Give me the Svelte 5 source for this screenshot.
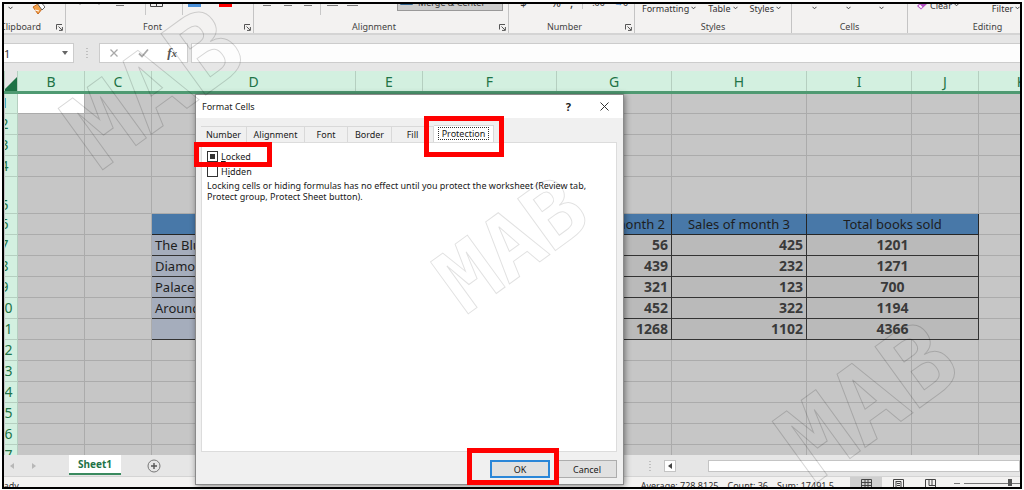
<script lang="ts">
	const columns = [
		{ name: 'B', width: 67 },
		{ name: 'C', width: 67 },
		{ name: 'D', width: 204 },
		{ name: 'E', width: 67 },
		{ name: 'F', width: 134 },
		{ name: 'G', width: 115 },
		{ name: 'H', width: 135 },
		{ name: 'I', width: 105 },
		{ name: 'J', width: 67 },
		{ name: 'K', width: 0 }
	];
	const books: Record<number, { title: string; month2: number; month3: number; total: number }> = {
		7: { title: 'The Blue', month2: 56, month3: 425, total: 1201 },
		8: { title: 'Diamond', month2: 439, month3: 232, total: 1271 },
		9: { title: 'Palace', month2: 321, month3: 123, total: 700 },
		10: { title: 'Around', month2: 452, month3: 322, total: 1194 },
		11: { title: '', month2: 1268, month3: 1102, total: 4366 }
	};
	const rows = Array.from({ length: 17 }, (_, i) => i + 1);
	const tabs = ['Number', 'Alignment', 'Font', 'Border', 'Fill', 'Protection'];
	let activeTab = $state('Protection');
	let locked = $state(false);
	let mixed = $state(true);
	let hidden = $state(false);
</script>

{#snippet chevron()}
	<svg class="chevron" width="5" height="4" viewBox="0 0 5 4"><path d="M.5 .8 2.5 2.8 4.5 .8" /></svg>
{/snippet}

{#snippet launcher()}
	<button class="launcher" aria-label="More options">
		<svg width="7" height="7" viewBox="0 0 7 7"><path d="M.5 5.5V.5H6M2.5 2.5 6 6M6.4 3V6.4H3" /></svg>
	</button>
{/snippet}

<div class="page">
	<div class="excel">
		<div class="ribbon">
			<section class="group clipboard">
				<div class="tools">
					<button aria-label="Paste">{@render chevron()}</button>
					<button aria-label="Format Painter">
						<svg width="14" height="14" viewBox="0 0 14 14">
							<path d="M2 6 7 3 11 8 7 13Z" fill="#f3a24a" stroke="#c8681c" />
							<path d="M6 2 9 0 14 6 11 9Z" fill="#fff" stroke="#666" />
							<path d="M4 9 8 10" stroke="#fff" />
						</svg>
					</button>
				</div>
				<div class="caption with-launcher"><span>Clipboard</span>{@render launcher()}</div>
			</section>
			<section class="group font">
				<div class="tools">
					<button aria-label="Bold"><svg width="20" height="14"><path d="M9 3h2" stroke="#999" /></svg></button>
					<button aria-label="Italic"><svg width="20" height="14"><path d="M8 3h2" stroke="#999" /></svg></button>
					<button aria-label="Underline"><svg width="20" height="14"><path d="M6 4.500h8" stroke="#777" /></svg></button>
					<i class="rule first"></i>
					<button class="drop" aria-label="Borders">
						<svg width="20" height="14"><path d="M4.500 0V5.500H16.500V0M10.500 0V5M4 1.500H17" stroke="#444" fill="none" /></svg>
					</button>
					<i class="rule"></i>
					<button class="drop" aria-label="Fill Color"><svg width="20" height="14"><rect x="5" width="13" height="6" fill="#4a90d9" /></svg></button>
					<button aria-label="Font Color"><svg width="20" height="14"><rect width="13" height="6" fill="#f00" /></svg></button>
				</div>
				<div class="caption with-launcher"><span>Font</span>{@render launcher()}</div>
			</section>
			<section class="group align">
				<div class="tools">
					<button aria-label="Align Left"><svg width="20" height="14"><path d="M5 4.500h8M5 1.500h8" stroke="#777" /></svg></button>
					<button aria-label="Center"><svg width="20" height="14"><path d="M6 4.500h8M5 1.500h8" stroke="#777" /></svg></button>
					<button aria-label="Align Right"><svg width="20" height="14"><path d="M6 4.500h8M5 1.500h8" stroke="#777" /></svg></button>
					<i class="rule"></i>
					<button aria-label="Decrease Indent"><svg width="20" height="14"><path d="M6 4.500h11M5 1.500h8" stroke="#777" /></svg></button>
					<button aria-label="Increase Indent"><svg width="20" height="14"><path d="M6 4.500h11M5 1.500h8" stroke="#777" /></svg></button>
					<button class="merge">
						<svg width="14" height="8" viewBox="0 0 14 8"><path d="M.5 0V6.500H12.500V0M6.500 4V6M1 3.500H12" stroke="#33658f" fill="#cfe3f5" /></svg>
						Merge &amp; Center
					</button>
				</div>
				<div class="caption with-launcher"><span>Alignment</span>{@render launcher()}</div>
			</section>
			<section class="group number">
				<div class="tools">
					<button class="currency">$</button>
					<button>%</button>
					<button>,</button>
					<i class="rule"></i>
					<button class="small">.00</button>
					<button class="small"><b>→</b>0</button>
				</div>
				<div class="caption with-launcher"><span>Number</span>{@render launcher()}</div>
			</section>
			<section class="group styles">
				<div class="tools">
					<button>Formatting {@render chevron()}</button>
					<button>Table {@render chevron()}</button>
					<button>Styles {@render chevron()}</button>
				</div>
				<div class="caption"><span>Styles</span></div>
			</section>
			<section class="group cells">
				<div class="tools">
					<button aria-label="Insert">{@render chevron()}</button>
					<button aria-label="Delete">{@render chevron()}</button>
					<button aria-label="Format">{@render chevron()}</button>
				</div>
				<div class="caption"><span>Cells</span></div>
			</section>
			<section class="group editing">
				<div class="tools">
					<button class="clear">
						<svg width="12" height="10" viewBox="0 0 12 10">
							<path d="M1 6 7 0 11 4 5 9.500Z" fill="#b452c4" />
							<path d="M2.500 6 4 4.500 6.500 7 5 8.300Z" fill="#fff" />
						</svg>
						Clear {@render chevron()}
					</button>
					<button>Filter {@render chevron()}</button>
				</div>
				<div class="caption"><span>Editing</span></div>
			</section>
		</div>

		<div class="formula">
			<div class="namebox">
				<input aria-label="Name box" value="1" />
				<svg width="6" height="4" viewBox="0 0 6 4"><path d="M0 0H6L3 4Z" fill="#666" /></svg>
			</div>
			<svg class="grip" width="2" height="10"><path d="M1 0V10" stroke="#999" stroke-dasharray="1 2" /></svg>
			<div class="entry">
				<button aria-label="Cancel entry"><svg width="10" height="10"><path d="M1.500 1.500 8.500 8.500M8.500 1.500 1.500 8.500" stroke="#a8a8a8" stroke-width="1.300" fill="none" /></svg></button>
				<button aria-label="Enter"><svg width="11" height="10"><path d="M1 5.500 4 8.500 10 1.500" stroke="#a8a8a8" stroke-width="1.800" fill="none" /></svg></button>
				<button class="fx" aria-label="Insert function">f<sub>x</sub></button>
			</div>
			<input class="formula-input" aria-label="Formula" />
		</div>

		<div class="sheet">
			<table>
				<colgroup>
					<col class="rowhead-col" />
					{#each columns as column}
						<col style:width={column.width ? `${column.width}px` : null} />
					{/each}
				</colgroup>
				<thead>
					<tr>
						<th class="corner" aria-label="Select all"><svg width="12" height="14"><path d="M12 0V14H0V12Z" fill="#1f7246" /></svg></th>
						{#each columns as column}
							<th>{column.name}</th>
						{/each}
					</tr>
				</thead>
				<tbody>
					{#each rows as row}
						<tr class:tall={row === 5}>
							<th class="rowhead"><div>{row}</div></th>
							<td class:active={row === 1}></td>
							<td></td>
							{#if row === 6}
								<td class="head"></td><td class="head"></td><td class="head"></td>
								<td class="head">Sales of month 2</td>
								<td class="head">Sales of month 3</td>
								<td class="head" colspan="2">Total books sold</td>
							{:else if books[row]}
								<td class="book">{books[row].title}</td>
								<td class="num"></td>
								<td class="num"></td>
								<td class="num">{books[row].month2}</td>
								<td class="num">{books[row].month3}</td>
								<td class="num total" colspan="2">{books[row].total}</td>
							{:else}
								<td></td><td></td><td></td><td></td><td></td><td></td><td></td>
							{/if}
							<td></td>
						</tr>
					{/each}
				</tbody>
			</table>
		</div>

		<div class="sheetbar">
			<div class="nav">
				<svg width="4" height="6"><path d="M4 0V6L0 3Z" fill="#b8b8b8" /></svg>
				<svg width="4" height="6"><path d="M0 0V6L4 3Z" fill="#b8b8b8" /></svg>
			</div>
			<button class="sheet-tab">Sheet1</button>
			<button class="add" aria-label="New sheet">
				<svg width="14" height="14" viewBox="0 0 14 14"><circle cx="7" cy="7" r="6" fill="none" stroke="#777" /><path d="M7 4V10M4 7H10" stroke="#555" stroke-width="1.400" /></svg>
			</button>
			<div class="scroller">
				<svg class="grip" width="2" height="10"><path d="M1 0V10" stroke="#999" stroke-dasharray="1 2" /></svg>
				<button class="scroll-left" aria-label="Scroll left"><svg width="4" height="6"><path d="M4 0V6L0 3Z" fill="#444" /></svg></button>
				<div class="thumb"></div>
			</div>
		</div>

		<div class="status">
			<span class="ready">Ready</span>
			<div class="stats">
				<span>Average: 728.8125</span>
				<span>Count: 36</span>
				<span>Sum: 17491.5</span>
			</div>
			<div class="views">
				<button class="on" aria-label="Normal"><svg width="11" height="9"><path d="M.5 .5H10.500V8.500H.5ZM4 0V9M7 0V9M0 3.500H11M0 6.500H11" /></svg></button>
				<button aria-label="Page Layout"><svg width="11" height="9"><path d="M.5 .5H10.500V8.500H.5ZM3 2.500H8V9M3 2V9M4 4.500H7M4 6.500H7" /></svg></button>
				<button aria-label="Page Break Preview"><svg width="11" height="9"><path d="M.5 .5H10.500V8.500H.5ZM4 0V6.500H11M7 0V6" /></svg></button>
			</div>
			<svg class="zoom" width="66" height="9"><path d="M0 6.500H6M10 6.500H66" stroke="#777" /><rect x="54" y="2" width="4" height="7" fill="#555" /></svg>
		</div>
	</div>

	<div class="dialog" role="dialog" aria-labelledby="dialog-title">
		<header>
			<h1 id="dialog-title">Format Cells</h1>
			<button aria-label="Help">?</button>
			<button aria-label="Close"><svg width="9" height="9"><path d="M.5 .5 8.500 8.500M8.500 .5 .5 8.500" stroke="#333" /></svg></button>
		</header>
		<div class="tabs" role="tablist">
			{#each tabs as tab}
				<button
					role="tab"
					class={tab.toLowerCase()}
					class:selected={tab === activeTab}
					aria-selected={tab === activeTab}
					onclick={() => (activeTab = tab)}
				>
					<span>{tab}</span>
				</button>
			{/each}
		</div>
		<div class="panel">
			<label><input type="checkbox" bind:checked={locked} bind:indeterminate={mixed} /><span><u>L</u>ocked</span></label>
			<label><input type="checkbox" bind:checked={hidden} /><span>H<u>i</u>dden</span></label>
			<p>Locking cells or hiding formulas has no effect until you protect the worksheet (Review tab, Protect group, Protect Sheet button).</p>
		</div>
		<footer>
			<button class="ok">OK</button>
			<button>Cancel</button>
		</footer>
	</div>

	<div class="mark mark-locked"></div>
	<div class="mark mark-tab"></div>
	<div class="mark mark-ok"></div>

	<span class="watermark one">MAB</span>
	<span class="watermark two">MAB</span>
	<span class="watermark three">MAB</span>
</div>

<style>
	:global(body) {
		background: #fdfdfd;
	}
	.page {
		position: relative;
		box-sizing: border-box;
		height: 100vh;
		padding: 2px 2px 1px;
		overflow: hidden;
		font-family: 'Noto Sans', 'Open Sans', sans-serif;
		font-size: 9px;
		color: #333;
	}
	.page * {
		box-sizing: border-box;
	}
	button,
	input {
		font: inherit;
		color: inherit;
		margin: 0;
		padding: 0;
		border: 0;
		background: none;
	}
	svg {
		flex: none;
	}
	.excel {
		display: flex;
		flex-direction: column;
		height: 100%;
		border: 2px solid #000;
		overflow: hidden;
		background: #e6e6e6;
	}

	/* ribbon */
	.ribbon {
		display: flex;
		flex: none;
		height: 31px;
		background: #f3f2f1;
		border-bottom: 2px solid #d4d4d4;
		overflow: hidden;
	}
	.group {
		position: relative;
		display: flex;
		flex-direction: column;
		justify-content: flex-end;
		flex: none;
		border-right: 1px solid #c4c4c4;
	}
	.clipboard {
		width: 62px;
	}
	.font {
		width: 188px;
	}
	.align {
		width: 255px;
	}
	.number {
		width: 126px;
	}
	.styles {
		width: 157px;
	}
	.cells {
		width: 116px;
	}
	.editing {
		width: 160px;
	}
	.tools {
		display: flex;
		flex: none;
		align-items: center;
		height: 14px;
	}
	.tools button {
		display: flex;
		flex: none;
		align-items: center;
		gap: 2px;
		height: 14px;
		white-space: nowrap;
	}
	.tools .drop {
		width: 36px;
	}
	.rule {
		width: 1px;
		height: 14px;
		background: #c8c8c8;
	}
	.rule.first {
		margin-left: 15px;
	}
	.chevron {
		fill: none;
		stroke: #444;
	}
	.clipboard .tools {
		gap: 18px;
		padding-left: 4px;
	}
	.clipboard .caption span {
		margin-left: -14px;
	}
	.font .tools {
		padding-left: 4px;
	}
	.align .tools {
		padding-left: 4px;
	}
	.align .rule {
		margin-left: 2px;
	}
	.tools .merge {
		width: 106px;
		margin: -8px 5px 0 auto;
		padding: 0 0 4px 2px;
		gap: 4px;
		background: #cdcdcd;
		border: 1px solid #999;
	}
	.number .tools {
		gap: 9px;
		padding-left: 11px;
		margin-bottom: 6px;
		font-size: 12px;
	}
	.number .currency {
		width: 22px;
	}
	.number .small {
		gap: 0;
		font-size: 9px;
	}
	.number .small b {
		color: #2b7cd3;
	}
	.styles .tools {
		gap: 12px;
		padding-left: 7px;
	}
	.cells .tools {
		justify-content: space-between;
		padding: 0 23px 0 20px;
	}
	.editing .tools {
		gap: 33px;
		padding-left: 8px;
	}
	.tools .clear {
		margin-top: -6px;
	}
	.caption {
		display: flex;
		flex: none;
		align-items: center;
		justify-content: center;
		height: 18px;
		padding-top: 6px;
		line-height: 12px;
		color: #444;
	}
	.with-launcher {
		padding-right: 14px;
	}
	.launcher {
		position: absolute;
		right: 2px;
		bottom: 2px;
		width: 7px;
		height: 7px;
		line-height: 0;
	}
	.launcher path {
		fill: none;
		stroke: #555;
	}

	/* formula bar */
	.formula {
		display: flex;
		flex: none;
		align-items: center;
		height: 36px;
	}
	.namebox {
		display: flex;
		align-items: center;
		width: 70px;
		height: 20px;
		padding-right: 5px;
		background: #fff;
		border: 1px solid #ccc;
		border-left: 0;
	}
	.namebox input {
		flex: 1;
		min-width: 0;
		font-size: 11px;
	}
	.formula .grip {
		margin: 0 11px 0 12px;
	}
	.entry {
		display: flex;
		align-items: center;
		justify-content: space-between;
		width: 89px;
		height: 20px;
		padding: 0 10px 0 9px;
		background: #fff;
		border: 1px solid #ccc;
	}
	.entry button {
		display: flex;
	}
	.entry .fx {
		align-items: center;
		font-family: 'Liberation Serif', serif;
		font-size: 13px;
		font-style: italic;
		font-weight: bold;
		line-height: 14px;
		color: #555;
	}
	.fx sub {
		font-size: 11px;
	}
	.formula-input {
		flex: 1;
		height: 20px;
		margin-left: 3px;
		background: #fdfdfd;
		border: 1px solid #ccc;
		border-right: 0;
	}

	/* grid */
	.sheet {
		flex: 1;
		min-height: 0;
		overflow: hidden;
		background: #c6c6c6;
	}
	table {
		width: calc(100% + 44px);
		table-layout: fixed;
		border-collapse: collapse;
		font-size: 13px;
		line-height: 16px;
		color: #1e1e1e;
	}
	.rowhead-col {
		width: 13px;
	}
	th,
	td {
		height: 21px;
		padding: 0 3px;
		overflow: hidden;
		white-space: nowrap;
		border: 1px solid #ababab;
	}
	th {
		padding: 0;
		font-size: 14px;
		font-weight: normal;
		color: #217346;
		background: #d3f0e0;
	}
	thead th {
		height: 21px;
		padding-top: 2px;
		border-top: 0;
		border-color: #b5cfc0;
		border-bottom: 3px solid #4f9a72;
	}
	.corner {
		line-height: 0;
		vertical-align: bottom;
		background: #e6e6e6;
	}
	.rowhead {
		border-left: 0;
		border-color: #b5cfc0;
	}
	.rowhead div {
		width: 28px;
		margin-left: -14px;
		text-align: center;
	}
	.tall td,
	.tall th {
		height: 37px;
		vertical-align: bottom;
	}
	.active {
		background: #fff;
	}
	.head {
		text-align: center;
		background: #4878a8;
		border-color: #262626;
	}
	.book {
		background: #a5adbc;
		border-color: #333;
	}
	.num {
		font-weight: bold;
		font-size: 14px;
		text-align: right;
		color: #3a3a3a;
		background: #bababa;
		border-color: #333;
	}
	.total {
		text-align: center;
	}

	/* sheet tabs and scroll bar */
	.sheetbar {
		display: flex;
		flex: none;
		align-items: center;
		height: 22px;
		border-bottom: 1px solid #d4d4d4;
	}
	.nav {
		display: flex;
		gap: 18px;
		width: 65px;
		padding-left: 6px;
	}
	.sheet-tab {
		align-self: flex-start;
		width: 52px;
		height: 20px;
		font-size: 10px;
		font-weight: bold;
		color: #217346;
		background: #fff;
		border-bottom: 2px solid #3a8a5f;
	}
	.add {
		display: flex;
		margin-left: 26px;
	}
	.scroller {
		display: flex;
		align-items: center;
		width: 371px;
		margin-left: auto;
	}
	.scroll-left {
		display: flex;
		align-items: center;
		justify-content: center;
		width: 12px;
		height: 12px;
		margin-left: 13px;
		background: #fff;
		border: 1px solid #c4c4c4;
	}
	.thumb {
		flex: 1;
		height: 12px;
		margin-left: 32px;
		background: #fff;
		border: 1px solid #c4c4c4;
	}
	.status {
		display: flex;
		flex: none;
		height: 10px;
		overflow: hidden;
		line-height: 12px;
		background: #f3f2f1;
	}
	.status span {
		padding-top: 3px;
	}
	.ready {
		margin-left: -11px;
	}
	.stats {
		display: flex;
		gap: 9px;
		margin-left: auto;
	}
	.views {
		display: flex;
		margin-left: 16px;
	}
	.views button {
		display: flex;
		justify-content: center;
		width: 32px;
		padding-top: 2px;
	}
	.views .on {
		background: #cfcfcf;
	}
	.views path {
		fill: none;
		stroke: #444;
	}
	.zoom {
		margin-left: 8px;
	}

	/* dialog */
	.dialog {
		position: absolute;
		left: 195px;
		top: 94px;
		display: flex;
		flex-direction: column;
		width: 429px;
		height: 391px;
		padding: 0 6px 6px 5px;
		color: #1a1a1a;
		background: #f0f0f0;
		border: 1px solid #8a8a8a;
		box-shadow: 1px 1px 6px rgba(0, 0, 0, 0.45);
	}
	header {
		display: flex;
		flex: none;
		align-items: center;
		height: 23px;
		margin: 0 -6px 0 -5px;
		padding: 0 14px 0 6px;
		background: #fff;
	}
	h1 {
		flex: 1;
		margin: 0;
		font-size: 9px;
		font-weight: normal;
	}
	header button {
		display: flex;
		margin-left: 29px;
		font-size: 11px;
		font-weight: bold;
	}
	.tabs {
		display: flex;
		align-items: flex-end;
		height: 25px;
		margin-bottom: -1px;
	}
	.tabs button {
		height: 17px;
		border: 1px solid #d9d9d9;
		border-left: 0;
	}
	.tabs .number {
		width: 46px;
	}
	.tabs .alignment {
		width: 58px;
	}
	.tabs .font {
		width: 43px;
	}
	.tabs .border {
		width: 44px;
	}
	.tabs .fill {
		width: 42px;
	}
	.tabs .protection {
		width: 60px;
	}
	.tabs .selected {
		height: 18px;
		padding-bottom: 2px;
		background: #fff;
		border-bottom-color: #fff;
	}
	.selected span {
		display: inline-block;
		padding: 0 3px;
		line-height: 11px;
		border: 1px dotted #333;
	}
	.panel {
		flex: 1;
		padding: 6px 16px 0 5px;
		background: #fff;
		border: 1px solid #dcdcdc;
	}
	label {
		display: flex;
		align-items: center;
		gap: 3px;
		height: 15px;
	}
	input[type='checkbox'] {
		appearance: none;
		width: 11px;
		height: 11px;
		background: #fff;
		border: 1px solid #333;
	}
	input[type='checkbox']:indeterminate {
		background: #333;
		box-shadow: inset 0 0 0 2px #fff;
	}
	input[type='checkbox']:checked {
		background: #333;
	}
	p {
		margin: 1px 0 0;
		line-height: 11px;
	}
	footer {
		display: flex;
		justify-content: flex-end;
		gap: 7px;
		padding-top: 8px;
	}
	footer button {
		width: 60px;
		height: 18px;
		background: #e1e1e1;
		border: 1px solid #adadad;
	}
	footer .ok {
		border: 2px solid #2a86d8;
	}

	/* call-outs over the dialog */
	.mark {
		position: absolute;
		border: 5px solid #f00;
		pointer-events: none;
	}
	.mark-locked {
		left: 194px;
		top: 142px;
		width: 78px;
		height: 25px;
	}
	.mark-tab {
		left: 424px;
		top: 116px;
		width: 80px;
		height: 41px;
	}
	.mark-ok {
		left: 467px;
		top: 448px;
		width: 92px;
		height: 37px;
	}

	.watermark {
		position: absolute;
		font-family: 'DejaVu Sans Mono', monospace;
		font-size: 104px;
		font-weight: bold;
		line-height: 1;
		color: transparent;
		-webkit-text-stroke: 1px rgba(0, 0, 0, 0.16);
		transform: translate(-50%, -50%) rotate(-36deg);
		pointer-events: none;
	}
	.one {
		left: 154px;
		top: 88px;
	}
	.two {
		left: 512px;
		top: 245px;
		font-size: 88px;
		-webkit-text-stroke-color: rgba(0, 0, 0, 0.12);
	}
	.three {
		left: 868px;
		top: 401px;
	}
</style>
